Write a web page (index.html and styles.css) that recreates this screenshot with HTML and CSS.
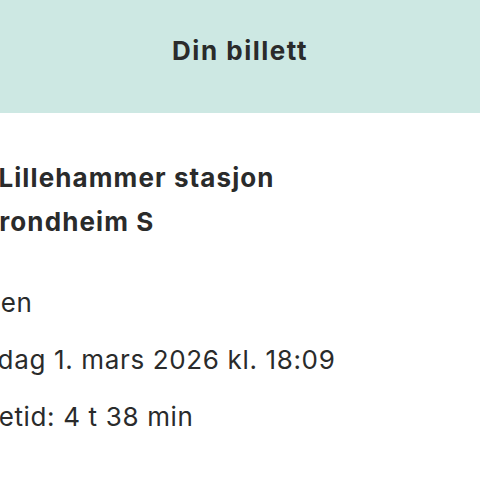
FILE: index.html
```html
<!DOCTYPE html>
<html lang="no">
<head>
<meta charset="utf-8">
<title>Din billett</title>
<link rel="stylesheet" href="styles.css">
</head>
<body>
<header class="topbar">
  <h1 class="title">Din billett</h1>
</header>
<main class="ticket">
  <div class="route">
    <p class="station">Fra: Lillehammer stasjon</p>
    <p class="station station--to">Til: Trondheim S</p>
  </div>
  <div class="details">
    <p class="detail">Voksen</p>
    <p class="detail detail--date">Søndag 1. mars 2026 kl. 18:09</p>
    <p class="detail detail--duration">Reisetid: 4 t 38 min</p>
  </div>
</main>
</body>
</html>
```
FILE: styles.css
```css
html, body {
  margin: 0;
  padding: 0;
  background: #ffffff;
  overflow: hidden;
}
body {
  font-family: Inter, "Noto Sans", sans-serif;
  color: #2a2b2b;
  width: 480px;
}
.topbar {
  background: #cde8e3;
  height: 113px;
  box-sizing: border-box;
  padding-top: 35px;
  text-align: center;
}
.title {
  margin: 0;
  font-size: 26px;
  font-weight: 700;
  line-height: normal;
  letter-spacing: 1.5px;
}
.ticket {
  padding-top: 43px;
  margin-left: -62px;
  white-space: nowrap;
}
.route p, .details p {
  margin: 0;
}
.station {
  font-size: 26px;
  font-weight: 700;
  line-height: 44px;
  letter-spacing: 1.1px;
}
.station--to {
  text-indent: -7.5px;
}
.details {
  margin-top: 30px;
}
.detail {
  font-size: 26px;
  font-weight: 400;
  line-height: 57px;
  letter-spacing: 0.65px;
}
.detail--date {
  text-indent: 10px;
}
.detail--duration {
  text-indent: 6.5px;
}
```
